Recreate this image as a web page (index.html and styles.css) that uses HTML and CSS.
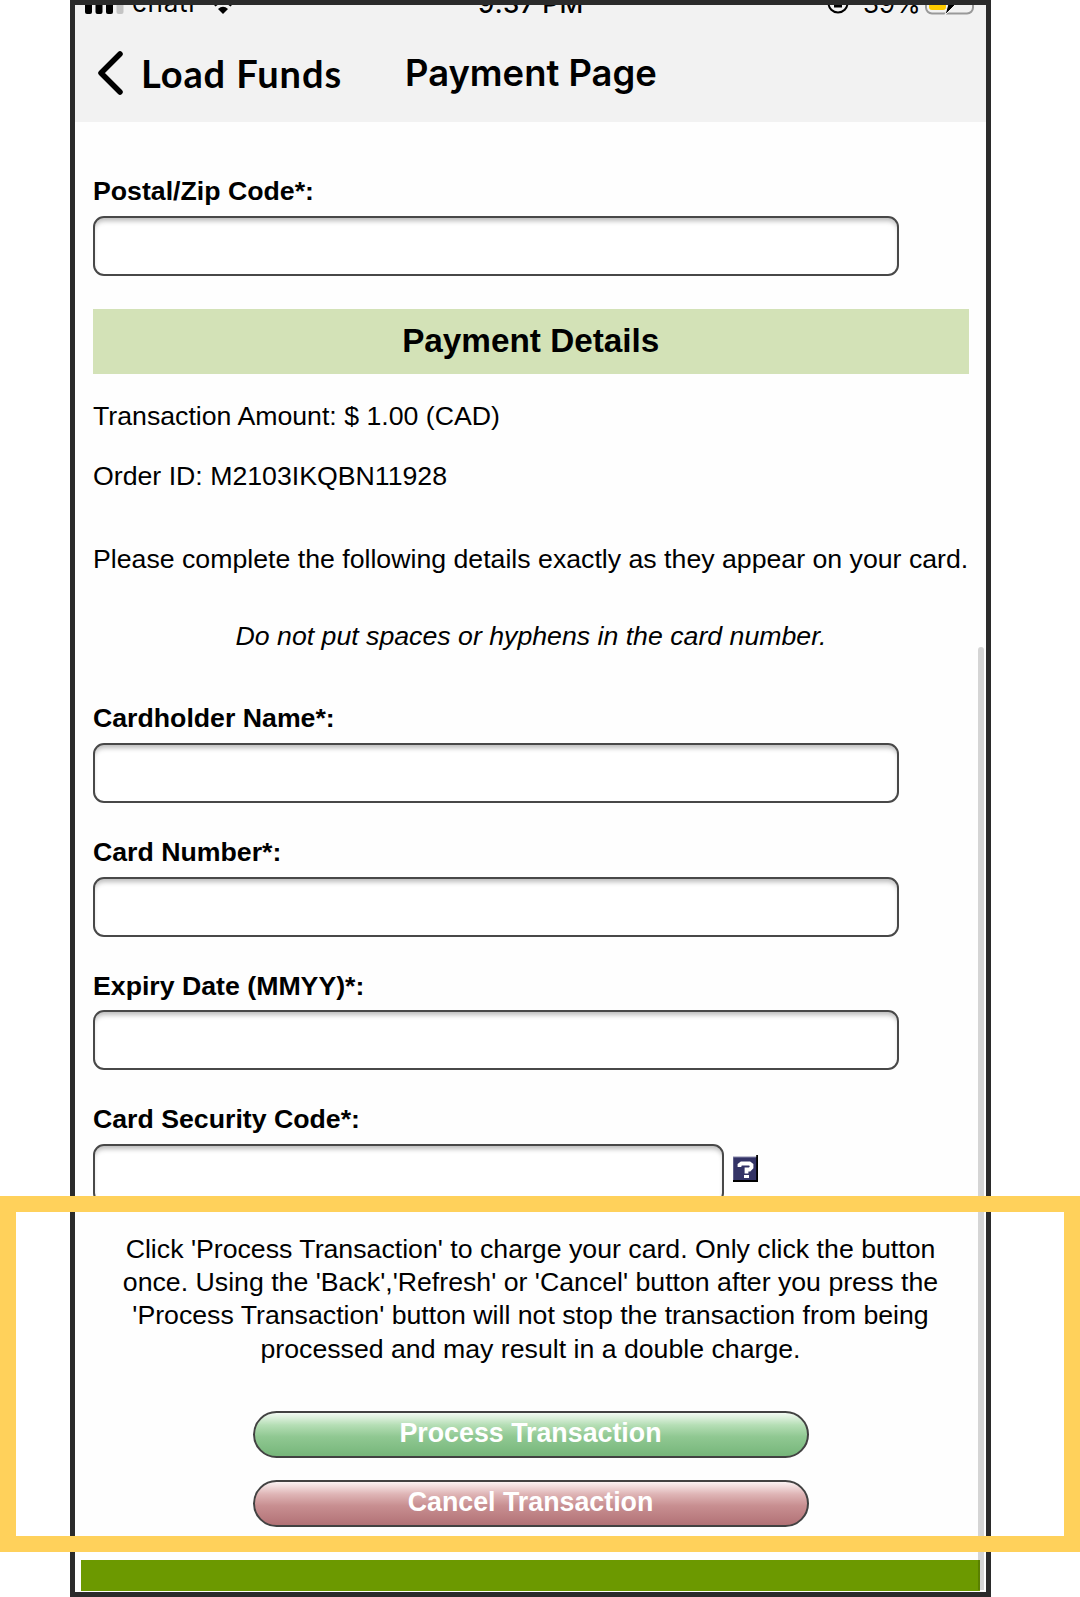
FILE: index.html
```html
<!DOCTYPE html>
<html lang="en">
<head>
<meta charset="utf-8">
<title>Payment Page</title>
<link rel="stylesheet" href="styles.css">
</head>
<body>
<main class="phone">
  <header class="header">
    <div class="status">
      <svg class="signal" width="40" height="18" viewBox="0 0 40 18"><rect x="0" y="6" width="7" height="12" rx="2"/><rect x="10.5" y="4" width="7" height="14" rx="2"/><rect x="21" y="2" width="7" height="16" rx="2"/><rect x="31.500" y="0" width="7" height="18" rx="2" fill="#c4c4c4"/></svg>
      <span class="carrier">chatr</span>
      <svg class="wifi" width="30" height="22" viewBox="0 0 30 22"><path d="M15 22 10 17Q15 12.500 20 17Z"/><path d="M6.500 13.500Q15 6 23.500 13.500" fill="none" stroke="#000" stroke-width="3"/></svg>
      <span class="time">9:37 PM</span>
      <svg class="lock" width="22" height="22" viewBox="0 0 22 22"><circle cx="11" cy="11" r="9.500" fill="none" stroke="#000" stroke-width="2"/><rect x="7" y="9" width="8" height="6.500"/></svg>
      <span class="percent">39%</span>
      <svg class="battery" width="54" height="25" viewBox="0 0 54 25"><rect x="1" y="1" width="47" height="22.500" rx="6" fill="none" stroke="#999" stroke-width="2"/><path d="M50.500 9q3 3 0 6" fill="#999"/><rect x="4" y="4" width="17" height="16" rx="3" fill="#fc0"/><path d="M31 2 17 14h6l-3 11 14-14h-7Z" stroke="#f2f2f2" stroke-width="1"/></svg>
    </div>
    <nav class="nav">
      <svg class="back" width="26" height="44" viewBox="0 0 26 44"><path d="M22 3 3 22 22 41" fill="none" stroke="#000" stroke-width="5.500" stroke-linecap="round" stroke-linejoin="round"/></svg>
      <span class="back-label">Load Funds</span>
      <h1 class="title">Payment Page</h1>
    </nav>
  </header>
  <form class="content">
    <label class="label zip">Postal/Zip Code*:</label>
    <div class="input"></div>
    <h2 class="section">Payment Details</h2>
    <p class="text amount">Transaction Amount: $ 1.00 (CAD)</p>
    <p class="text order">Order ID: M2103IKQBN11928</p>
    <p class="text please">Please complete the following details exactly as they appear on your card.</p>
    <p class="text hint">Do not put spaces or hyphens in the card number.</p>
    <label class="label holder">Cardholder Name*:</label>
    <div class="input"></div>
    <label class="label number">Card Number*:</label>
    <div class="input"></div>
    <label class="label expiry">Expiry Date (MMYY)*:</label>
    <div class="input"></div>
    <label class="label security">Card Security Code*:</label>
    <div class="code-row">
      <div class="input short"></div>
      <svg class="help" width="25" height="27" viewBox="0 0 25 27"><path d="M0 2H25V27H0Z" fill="#333366"/><path d="M23.200 0H25V27H0V25H23.200Z"/><path d="M0 25V2H23" fill="none" stroke="#8888aa" stroke-width="1"/><path d="M6.500 12V10L8.500 8.500H16.500L18.500 10V12.500L16.500 14.500H13.500V18.500" fill="none" stroke="#fff" stroke-width="3.800"/><path d="M11 20H16V23H11Z" fill="#fff"/></svg>
    </div>
    <p class="notice"><span>Click 'Process Transaction' to charge your card. Only click the button</span><span>once. Using the 'Back','Refresh' or 'Cancel' button after you press the</span><span>'Process Transaction' button will not stop the transaction from being</span><span>processed and may result in a double charge.</span></p>
    <div class="button process"><span>Process Transaction</span></div>
    <div class="button cancel"><span>Cancel Transaction</span></div>
  </form>
  <footer class="footer"></footer>
  <div class="scrollbar"></div>
</main>
<div class="highlight"></div>
</body>
</html>
```
FILE: styles.css
```css
* { box-sizing: border-box; }
body { margin: 0; width: 1080px; height: 1597px; background: #fff; overflow: hidden; position: relative; font-family: "Liberation Sans", Arial, sans-serif; color: #000; }
h1, h2, p { margin: 0; }
.phone { position: relative; width: 921px; height: 1597px; margin-left: 70px; border: 5px solid #2b2b2b; overflow: hidden; background: #fefefe; }
.header { height: 117px; background: #f2f2f2; }
.status { display: flex; align-items: flex-end; height: 10px; padding-left: 10px; font-family: Inter, sans-serif; font-size: 26px; line-height: 32px; white-space: nowrap; }
.status svg { flex: none; }
.signal { margin-bottom: 1px; }
.carrier { width: 61px; margin-left: 7px; margin-bottom: -4px; letter-spacing: .7px; }
.wifi { margin-left: 15px; margin-bottom: 1px; }
.time { width: 108px; margin-left: 240px; margin-bottom: -5px; font-weight: 500; letter-spacing: .4px; }
.lock { margin-left: 241px; margin-bottom: 1px; }
.percent { width: 57px; margin-left: 14px; margin-bottom: -5px; }
.battery { margin-left: 5px; margin-bottom: 0; }
.nav { display: flex; align-items: center; height: 108px; padding: 17px 0 0 23px; margin-top: -5px; white-space: nowrap; }
.back-label { width: 264px; margin-left: 17px; font: 700 38px/48px Lato, sans-serif; letter-spacing: .9px; }
.title { font: 600 36.400px/48px Inter, sans-serif; }
.content { padding: 52px 16px 0 17.500px; height: 1433px; }
.label { display: block; height: 42px; padding-left: .5px; font-weight: 700; font-size: 26.700px; line-height: 34px; white-space: nowrap; }
.input { width: 806.500px; height: 60px; border: 2px solid #484848; border-radius: 11px; background: #fff; box-shadow: inset 0 5px 5px -2px #bbb; }
.section { height: 65px; margin: 33px 0 25px; width: 876.500px; background: #d3e2b7; text-align: center; font-size: 33.300px; line-height: 63px; }
.text { height: 34px; padding-left: .5px; font-size: 26.700px; line-height: 34px; white-space: nowrap; }
.order { margin-top: 26px; }
.please { margin-top: 48.500px; }
.hint { margin-top: 43.500px; padding-right: 1px; font-style: italic; text-align: center; }
.holder { margin-top: 48px; }
.number, .expiry, .security { height: 41.500px; margin-top: 32px; }
.code-row { display: flex; }
.short { width: 631px; }
.help { margin: 11px 0 0 9.500px; }
.notice { display: flex; flex-direction: column; align-items: center; width: 876px; margin-top: 29px; font-size: 26.700px; line-height: 33.400px; white-space: nowrap; }
.button { width: 556px; height: 47px; margin-left: 160px; border: 2px solid #424242; border-radius: 24px; color: #fff; font-size: 26.800px; font-weight: 700; line-height: 41px; text-align: center; white-space: nowrap; }
.process { margin-top: 45px; background: linear-gradient(#f2faf2 0, #b5deb5 28%, #90c892 55%, #76b67a 100%); }
.cancel { margin-top: 22px; background: linear-gradient(#fbf2f2 0, #dfb5b6 28%, #c88f91 55%, #b27276 100%); }
.footer { width: 899px; height: 31px; margin: 5px 0 0 6px; background: #6c9900; }
.scrollbar { position: absolute; top: 642px; right: 2px; width: 6.500px; height: 943px; border-radius: 4px 4px 0 0; background: rgba(0,0,0,.16); }
.highlight { position: absolute; left: 0; top: 1196px; width: 1080px; height: 355.500px; border: 16px solid #ffd15b; }
```
